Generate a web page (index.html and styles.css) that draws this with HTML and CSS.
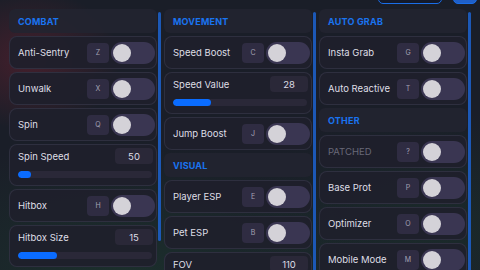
FILE: index.html
```html
<!DOCTYPE html>
<html lang="en">
<head>
    <meta charset="UTF-8">
    <meta name="viewport" content="width=device-width, initial-scale=1.0">
    <title>Menu</title>
    <link rel="stylesheet" href="styles.css">
</head>
<body>
    <div class="topbar">
        <span class="top-btn top-btn-wide"></span>
        <span class="top-btn"></span>
    </div>

    <div class="columns">
        <!-- left column -->
        <div class="column">
            <div class="col-list">
                <div class="section">COMBAT</div>
                <div class="card">
                    <span class="label">Anti-Sentry</span>
                    <span class="key">Z</span>
                    <span class="toggle"><span class="knob"></span></span>
                </div>
                <div class="card">
                    <span class="label">Unwalk</span>
                    <span class="key">X</span>
                    <span class="toggle"><span class="knob"></span></span>
                </div>
                <div class="card">
                    <span class="label">Spin</span>
                    <span class="key">Q</span>
                    <span class="toggle"><span class="knob"></span></span>
                </div>
                <div class="card slider-card">
                    <div class="slider-head">
                        <span class="label">Spin Speed</span>
                        <span class="value">50</span>
                    </div>
                    <div class="track"><div class="fill" style="width: 10%"></div></div>
                </div>
                <div class="card">
                    <span class="label">Hitbox</span>
                    <span class="key">H</span>
                    <span class="toggle"><span class="knob"></span></span>
                </div>
                <div class="card slider-card">
                    <div class="slider-head">
                        <span class="label">Hitbox Size</span>
                        <span class="value">15</span>
                    </div>
                    <div class="track"><div class="fill" style="width: 29%"></div></div>
                </div>
            </div>
            <div class="scrollbar"><div class="thumb thumb-short"></div></div>
        </div>

        <!-- middle column -->
        <div class="column">
            <div class="col-list">
                <div class="section">MOVEMENT</div>
                <div class="card">
                    <span class="label">Speed Boost</span>
                    <span class="key">C</span>
                    <span class="toggle"><span class="knob"></span></span>
                </div>
                <div class="card slider-card">
                    <div class="slider-head">
                        <span class="label">Speed Value</span>
                        <span class="value">28</span>
                    </div>
                    <div class="track"><div class="fill" style="width: 28%"></div></div>
                </div>
                <div class="card">
                    <span class="label">Jump Boost</span>
                    <span class="key">J</span>
                    <span class="toggle"><span class="knob"></span></span>
                </div>
                <div class="section">VISUAL</div>
                <div class="card">
                    <span class="label">Player ESP</span>
                    <span class="key">E</span>
                    <span class="toggle"><span class="knob"></span></span>
                </div>
                <div class="card">
                    <span class="label">Pet ESP</span>
                    <span class="key">B</span>
                    <span class="toggle"><span class="knob"></span></span>
                </div>
                <div class="card slider-card">
                    <div class="slider-head">
                        <span class="label">FOV</span>
                        <span class="value">110</span>
                    </div>
                    <div class="track"><div class="fill" style="width: 50%"></div></div>
                </div>
            </div>
            <div class="scrollbar"><div class="thumb"></div></div>
        </div>

        <!-- right column -->
        <div class="column">
            <div class="col-list">
                <div class="section">AUTO GRAB</div>
                <div class="card">
                    <span class="label">Insta Grab</span>
                    <span class="key">G</span>
                    <span class="toggle"><span class="knob"></span></span>
                </div>
                <div class="card">
                    <span class="label">Auto Reactive</span>
                    <span class="key">T</span>
                    <span class="toggle"><span class="knob"></span></span>
                </div>
                <div class="section">OTHER</div>
                <div class="card">
                    <span class="label label-off">PATCHED</span>
                    <span class="key">?</span>
                    <span class="toggle"><span class="knob"></span></span>
                </div>
                <div class="card">
                    <span class="label">Base Prot</span>
                    <span class="key">P</span>
                    <span class="toggle"><span class="knob"></span></span>
                </div>
                <div class="card">
                    <span class="label">Optimizer</span>
                    <span class="key">O</span>
                    <span class="toggle"><span class="knob"></span></span>
                </div>
                <div class="card">
                    <span class="label">Mobile Mode</span>
                    <span class="key">M</span>
                    <span class="toggle"><span class="knob"></span></span>
                </div>
            </div>
            <div class="scrollbar"><div class="thumb"></div></div>
        </div>
    </div>
</body>
</html>
```

FILE: styles.css
```css
html, body {
    height: 100%;
}

body {
    margin: 0;
    padding: 0 0 0 9px;
    overflow: hidden;
    font-family: Inter, "Liberation Sans", Arial, sans-serif;
    color: #dedee6;
    background-color: #1a1e28;
    background-image:
        radial-gradient(ellipse 90px 70px at 30px 60px, rgba(120, 32, 48, 0.45), transparent),
        radial-gradient(ellipse 260px 140px at 120px 280px, rgba(30, 80, 52, 0.35), transparent),
        radial-gradient(ellipse 200px 120px at 430px 230px, rgba(28, 70, 48, 0.3), transparent);
}

/* bottom edge of the buttons above the panel */
.topbar {
    display: flex;
    justify-content: flex-end;
    gap: 11px;
    height: 9px;
    padding-right: 3px;
}

.top-btn {
    display: block;
    width: 22px;
    height: 12px;
    margin-top: -10px;
    border: 1px solid #1a6ee8;
    border-radius: 5px;
    background-color: #1f5fc8;
}

.top-btn-wide {
    width: 62px;
    background-color: #141a2a;
}

.columns {
    display: flex;
    gap: 3px;
}

.column {
    display: flex;
    width: 152px;
}

.col-list {
    display: flex;
    flex-direction: column;
    gap: 3px;
    width: 148px;
    flex-shrink: 0;
}

.scrollbar {
    width: 3px;
    margin-left: 1px;
    padding-top: 3px;
}

.thumb {
    height: 270px;
    border-radius: 2px;
    background-color: #1c58b6;
}

.thumb-short {
    height: 229px;
}

.section {
    height: 24px;
    padding-left: 9px;
    display: flex;
    align-items: center;
    font-size: 9px;
    font-weight: 700;
    letter-spacing: 0.2px;
    color: #1a74f0;
    background-color: rgba(34, 36, 48, 0.9);
    border-radius: 6px;
}

.card {
    height: 33px;
    box-sizing: border-box;
    display: flex;
    align-items: center;
    padding: 0 1px 0 8px;
    background-color: rgba(30, 31, 43, 0.92);
    border: 1px solid rgba(58, 58, 76, 0.6);
    border-radius: 8px;
}

.label {
    flex: 1;
    font-size: 9.5px;
}

.label-off {
    color: #686878;
}

.key {
    width: 22px;
    height: 20px;
    margin-right: 2px;
    display: flex;
    align-items: center;
    justify-content: center;
    font-size: 7px;
    color: #a4a2b4;
    background-color: #2f2c42;
    border-radius: 4px;
}

.toggle {
    width: 44px;
    height: 22px;
    padding: 2px;
    box-sizing: border-box;
    background-color: #3a3652;
    border-radius: 11px;
}

.knob {
    display: block;
    width: 18px;
    height: 18px;
    border-radius: 50%;
    background-color: #d4d2d8;
}

.slider-card {
    height: 42px;
    flex-direction: column;
    align-items: stretch;
    justify-content: flex-start;
    padding: 2px 3px 0 8px;
}

.slider-head {
    display: flex;
    align-items: center;
    height: 18px;
}

.value {
    width: 38px;
    height: 16px;
    display: flex;
    align-items: center;
    justify-content: center;
    font-size: 9.5px;
    background-color: #2a2838;
    border-radius: 4px;
}

.track {
    height: 7px;
    margin-top: 6px;
    margin-right: 1px;
    background-color: #2a2838;
    border-radius: 4px;
    overflow: hidden;
}

.fill {
    height: 100%;
    background-color: #0a6cff;
    border-radius: 4px;
}
```
